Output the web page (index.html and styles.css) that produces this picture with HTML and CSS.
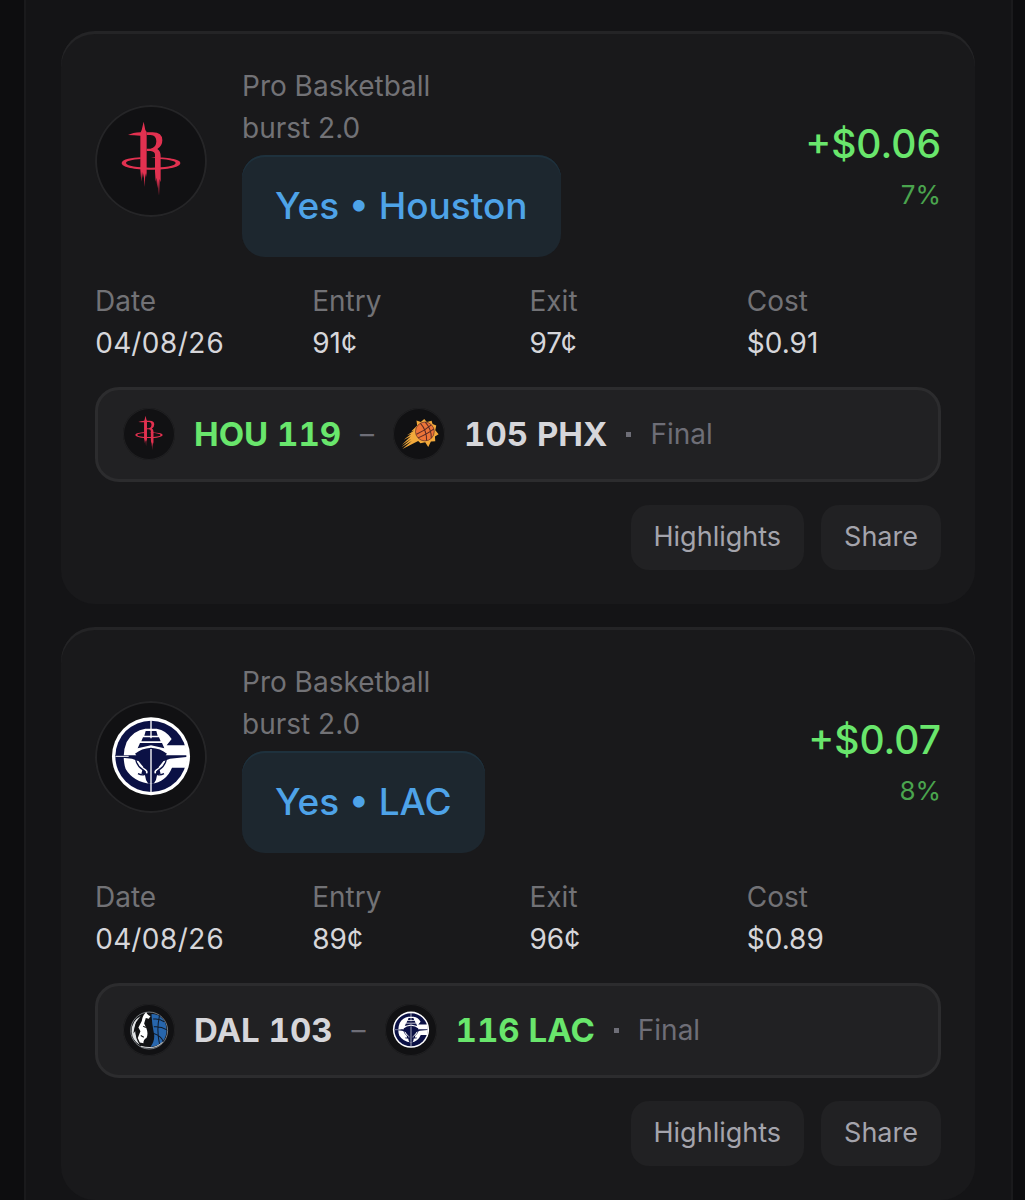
FILE: index.html
```html
<!DOCTYPE html>
<html lang="en">
<head>
    <meta charset="UTF-8">
    <meta name="viewport" content="width=device-width, initial-scale=1.0">
    <title>Positions</title>
    <link rel="stylesheet" href="styles.css">
</head>
<body>
    <!-- team logos, reused by the avatars and the score rows -->
    <svg class="sprite" aria-hidden="true">
        <symbol id="rockets" viewBox="17 20 336 336">
            <g fill="#e23150">
                <path d="M163 70 L168 95 L172 101 V207 Q173 224 170 237 L168 225 L166 266 L163 225 L161 240 L158 220 L156 250 L153 215 V112 Q134 111 116 110 Q130 103 154 102 L157 95 Z"/>
                <path d="M172 102 H190 Q219 102 219 126 Q219 143 204 152 Q214 158 214 174 V252 L211 242 L209 292 L206 245 L204 270 L201 238 L199 250 L197 220 V169 Q197 160 184 158 H172 V151 H183 Q201 149 201 129 Q201 111 184 110 H172 Z"/>
                <path fill-rule="evenodd" d="M185 177 C235 177 273 183 273 194 C273 207 235 214 185 214 C135 214 97 207 97 194 C97 183 130 178 154 177 V182 C129 184 110 188 110 194 C110 203 146 208 185 208 C226 208 259 203 259 194 C259 188 237 184 213 182 Z"/>
            </g>
        </symbol>
        <symbol id="clippers" viewBox="17 20 336 336">
            <circle cx="185" cy="186" r="117" fill="#fff"/>
            <circle cx="185" cy="186" r="107" fill="#0b1145"/>
            <path fill="#fff" d="M232 153 H288 Q294 168 294 186 Q294 204 288 220 H248 Q231 262 185 269 Q132 263 109 224 Q103 206 103 186 Q103 164 112 143 Q132 108 168 103 H202 Q231 108 247 134 Z"/>
            <path fill="#0b1145" d="M169 110 H201 L205 124 H165 Z M161 129 H209 L214 141 H156 Z M152 146 H218 L225 162 L185 153 L145 162 Z"/>
            <path fill="#0b1145" d="M185 160 Q214 162 233 178 L229 183 H291 V188 L242 193 L222 201 L208 218 L214 238 L203 243 Q202 258 193 268 H177 Q168 258 167 243 L156 238 L162 218 L148 201 L128 193 L78 188 V183 H141 L137 178 Q156 162 185 160 Z"/>
            <path d="M185 76 V132 M185 164 V293" fill="none" stroke="#fff" stroke-width="4"/>
            <path d="M78 186 H118" fill="none" stroke="#fff" stroke-width="3"/>
            <path d="M144 201 Q148 216 164 224 Q176 230 171 237 M226 201 Q222 216 206 224 Q194 230 199 237" fill="none" stroke="#fff" stroke-width="5"/>
            <path d="M139 194 Q142 214 160 226 Q170 233 166 240 Q158 244 146 238 M231 194 Q228 214 210 226 Q200 233 204 240 Q212 244 224 238" fill="none" stroke="#0b1145" stroke-width="4"/>
        </symbol>
        <symbol id="suns" viewBox="908 70 155 155">
            <path fill="#f2a93b" d="M980 122 L978 107 L991 112 L1001 103 L1009 112 L1023 108 L1026 118 L1037 122 L1034 136 L1044 148 L1033 155 L1034 169 L1021 170 L1013 186 L1004 172 L990 175 L983 168 L936 192 L964 168 L933 187 L963 161 L934 180 L961 154 L940 165 L963 147 L950 151 L971 137 L962 140 Z"/>
            <circle cx="1003" cy="140" r="28" fill="#ed7438" stroke="#5a2a25" stroke-width="2"/>
            <path d="M978 148 Q1003 137 1022 120 M983 159 Q1012 146 1030 132 M990 116 Q1009 137 1008 167 M1004 112 Q1023 132 1022 160" fill="none" stroke="#5a2a25" stroke-width="3"/>
        </symbol>
        <symbol id="mavericks" viewBox="98 70 155 155">
            <circle cx="176" cy="149" r="55" fill="#111214" stroke="#a9b0b5" stroke-width="2"/>
            <path fill="#2766ad" d="M183 100 Q213 101 224 127 Q234 158 217 181 Q205 195 180 198 Q196 177 189 151 Q184 127 183 100 Z"/>
            <path d="M188 115 Q207 112 221 123 M190 138 Q211 136 229 147 M190 158 Q211 165 218 181 M207 104 Q197 147 207 190" fill="none" stroke="#111b29" stroke-width="3"/>
            <path fill="#fff" d="M167 94 Q172 105 180 106 L175 114 L166 112 L161 128 L168 143 Q174 159 168 171 Q158 176 159 187 L148 185 L142 171 L150 151 L144 140 L154 121 Q155 106 167 94 Z"/>
            <path fill="#dfe2e4" d="M151 106 Q123 121 124 152 Q125 179 148 192 Q133 170 136 149 L129 158 Q132 126 151 106 Z"/>
            <path d="M158 136 L166 140 M151 164 L160 169 M139 123 Q132 143 139 166" fill="none" stroke="#111214" stroke-width="3"/>
            <path d="M151 196 Q191 208 216 184" fill="none" stroke="#d5d8da" stroke-width="3"/>
        </symbol>
    </svg>

    <main class="panel">
        <article class="card">
            <header class="card-head">
                <span class="avatar"><svg><use href="#rockets"/></svg></span>
                <div class="market">
                    <div class="muted">Pro Basketball</div>
                    <div class="muted">burst 2.0</div>
                    <div class="pick">Yes • Houston</div>
                </div>
                <div class="profit">
                    <div class="amount">+$0.06</div>
                    <div class="percent">7%</div>
                </div>
            </header>
            <dl class="stats">
                <div><dt>Date</dt><dd class="date">04/08/26</dd></div>
                <div><dt>Entry</dt><dd>91¢</dd></div>
                <div><dt>Exit</dt><dd>97¢</dd></div>
                <div><dt>Cost</dt><dd>$0.91</dd></div>
            </dl>
            <div class="score">
                <span class="avatar small"><svg><use href="#rockets"/></svg></span>
                <span class="team win">HOU 119</span>
                <span class="dash">–</span>
                <span class="avatar small"><svg><use href="#suns"/></svg></span>
                <span class="team">105 PHX</span>
                <span class="dot"></span>
                <span class="status">Final</span>
            </div>
            <div class="actions">
                <button type="button">Highlights</button>
                <button type="button">Share</button>
            </div>
        </article>

        <article class="card">
            <header class="card-head">
                <span class="avatar"><svg><use href="#clippers"/></svg></span>
                <div class="market">
                    <div class="muted">Pro Basketball</div>
                    <div class="muted">burst 2.0</div>
                    <div class="pick">Yes • LAC</div>
                </div>
                <div class="profit">
                    <div class="amount">+$0.07</div>
                    <div class="percent">8%</div>
                </div>
            </header>
            <dl class="stats">
                <div><dt>Date</dt><dd class="date">04/08/26</dd></div>
                <div><dt>Entry</dt><dd>89¢</dd></div>
                <div><dt>Exit</dt><dd>96¢</dd></div>
                <div><dt>Cost</dt><dd>$0.89</dd></div>
            </dl>
            <div class="score">
                <span class="avatar small"><svg><use href="#mavericks"/></svg></span>
                <span class="team">DAL 103</span>
                <span class="dash">–</span>
                <span class="avatar small"><svg><use href="#clippers"/></svg></span>
                <span class="team win">116 LAC</span>
                <span class="dot"></span>
                <span class="status">Final</span>
            </div>
            <div class="actions">
                <button type="button">Highlights</button>
                <button type="button">Share</button>
            </div>
        </article>
    </main>
</body>
</html>
```
FILE: styles.css
```css
* {
    box-sizing: border-box;
}
body {
    margin: 0;
    padding: 0 12px 0 24px;
    background: #0d0d0f;
    font-family: Inter, "Liberation Sans", sans-serif;
    font-size: 28px;
    line-height: 42px;
    color: #d6d6da;
}
.sprite {
    display: none;
}
.panel {
    display: flex;
    flex-direction: column;
    gap: 23px;
    min-height: 100vh;
    padding: 31px 36px 0 35px;
    background: #141416;
    border: solid #1a1a1c;
    border-width: 0 2px;
}
.card {
    display: flex;
    flex-direction: column;
    gap: 23px;
    padding: 34px;
    background: #19191b;
    border-radius: 34px;
    box-shadow: inset 0 3px 0 #242426;
}
.card-head {
    display: flex;
    align-items: center;
}
.avatar {
    flex: none;
    width: 112px;
    height: 112px;
    border-radius: 50%;
    background: #111113;
    box-shadow: inset 0 0 0 2px #252527;
}
.avatar svg {
    display: block;
    width: 100%;
    height: 100%;
}
.avatar.small {
    width: 52px;
    height: 52px;
    box-shadow: inset 0 0 0 1px #202022;
}
.market {
    margin-left: 35px;
}
.muted,
.stats dt {
    color: #727276;
}
.pick {
    width: fit-content;
    margin-top: 6px;
    padding: 26px 33px;
    font-size: 37px;
    line-height: 50px;
    font-weight: 500;
    color: #4ea3e8;
    background: #1d272f;
    border-radius: 23px;
    box-shadow: inset 0 2px 0 #1e313d;
}
.profit {
    margin-left: auto;
    padding-top: 8px;
    text-align: right;
}
.amount {
    font-size: 39px;
    line-height: 60px;
    font-weight: 500;
    color: #69e66c;
}
.percent {
    font-size: 26px;
    color: #4aa44e;
}
.stats {
    display: grid;
    grid-template-columns: repeat(4, 1fr);
    gap: 23px;
    margin: 0;
}
.stats dd {
    margin: 0;
}
.date,
.team {
    font-variant-numeric: tabular-nums;
}
.score {
    display: flex;
    align-items: center;
    gap: 19px;
    padding: 18px 25px 19px;
    background: #212123;
    border: 3px solid #2c2c2e;
    border-radius: 24px;
}
.team {
    font-size: 33px;
    line-height: 52px;
    font-weight: 700;
}
.win {
    color: #69e66c;
}
.dash,
.status {
    color: #6e6e77;
}
.dot {
    width: 5px;
    height: 5px;
    background: #6e6e77;
}
.actions {
    display: flex;
    justify-content: flex-end;
    gap: 17px;
}
.actions button {
    padding: 11px 23px 12px;
    font: inherit;
    font-size: 27px;
    color: #a4a4ac;
    background: #212123;
    border: 0;
    border-radius: 18px;
}
```
